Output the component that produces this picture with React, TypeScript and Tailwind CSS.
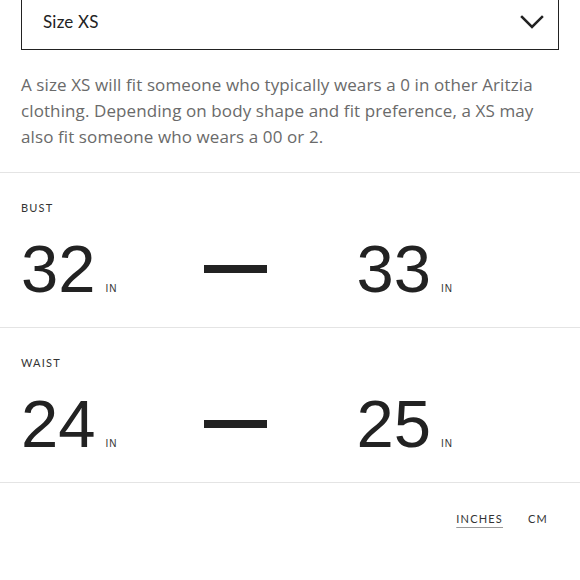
const sans = "font-['Lato','Liberation_Sans',sans-serif]";

interface Range {
  label: string;
  from: number;
  to: number;
}

const ranges: Range[] = [
  { label: "BUST", from: 32, to: 33 },
  { label: "WAIST", from: 24, to: 25 },
];

function Measure({ value }: { value: number }) {
  return (
    <div className="flex items-baseline">
      <span className="font-['Liberation_Sans',sans-serif] text-[67px] leading-none text-[#222222]">
        {value}
      </span>
      <span className="ml-[10px] text-[10px] tracking-[1px] text-[#333333] font-['Liberation_Sans',sans-serif]">
        IN
      </span>
    </div>
  );
}

function RangeRow({ range }: { range: Range }) {
  return (
    <div className="border-t border-[#e4e4e4] px-[21px] pt-[29px] pb-[25px]">
      <div className="text-[11px] leading-[12px] tracking-[1.2px] text-[#333333]">
        {range.label}
      </div>
      <div className="flex items-center mt-[21px]">
        <div className="w-[183px]">
          <Measure value={range.from} />
        </div>
        <div className="w-[63px] h-[8px] bg-[#222222]" />
        <div className="w-[186px] flex justify-end">
          <Measure value={range.to} />
        </div>
      </div>
    </div>
  );
}

export default function App() {
  return (
    <div className={`w-[580px] h-[580px] bg-white overflow-hidden ${sans}`}>
      <div className="px-[21px]">
        <div className="-mt-[6px] h-[56px] border border-[#222222] flex items-center justify-between pl-[21px] pr-[14px]">
          <span className="text-[17px] tracking-[0.2px] text-[#222222]">Size XS</span>
          <svg width="24" height="14" viewBox="0 0 24 14" fill="none">
            <polyline
              points="2,2 12,12 22,2"
              stroke="#222222"
              strokeWidth="2.5"
              strokeLinecap="square"
            />
          </svg>
        </div>
        <p className="mt-[22px] mb-[22px] font-['Open_Sans','Liberation_Sans',sans-serif] text-[17px] tracking-[0.1px] leading-[26px] text-[#6a6a6a]">
          A size XS will fit someone who typically wears a 0 in other Aritzia
          <br />
          clothing. Depending on body shape and fit preference, a XS may
          <br />
          also fit someone who wears a 00 or 2.
        </p>
      </div>
      {ranges.map((r) => (
        <RangeRow key={r.label} range={r} />
      ))}
      <div className="border-t border-[#e4e4e4] flex justify-end gap-[25px] pr-[32px] pt-[28px] text-[11px] tracking-[1.2px] text-[#333333]">
        <span className="underline underline-offset-[4px] decoration-[#999999]">INCHES</span>
        <span>CM</span>
      </div>
    </div>
  );
}
